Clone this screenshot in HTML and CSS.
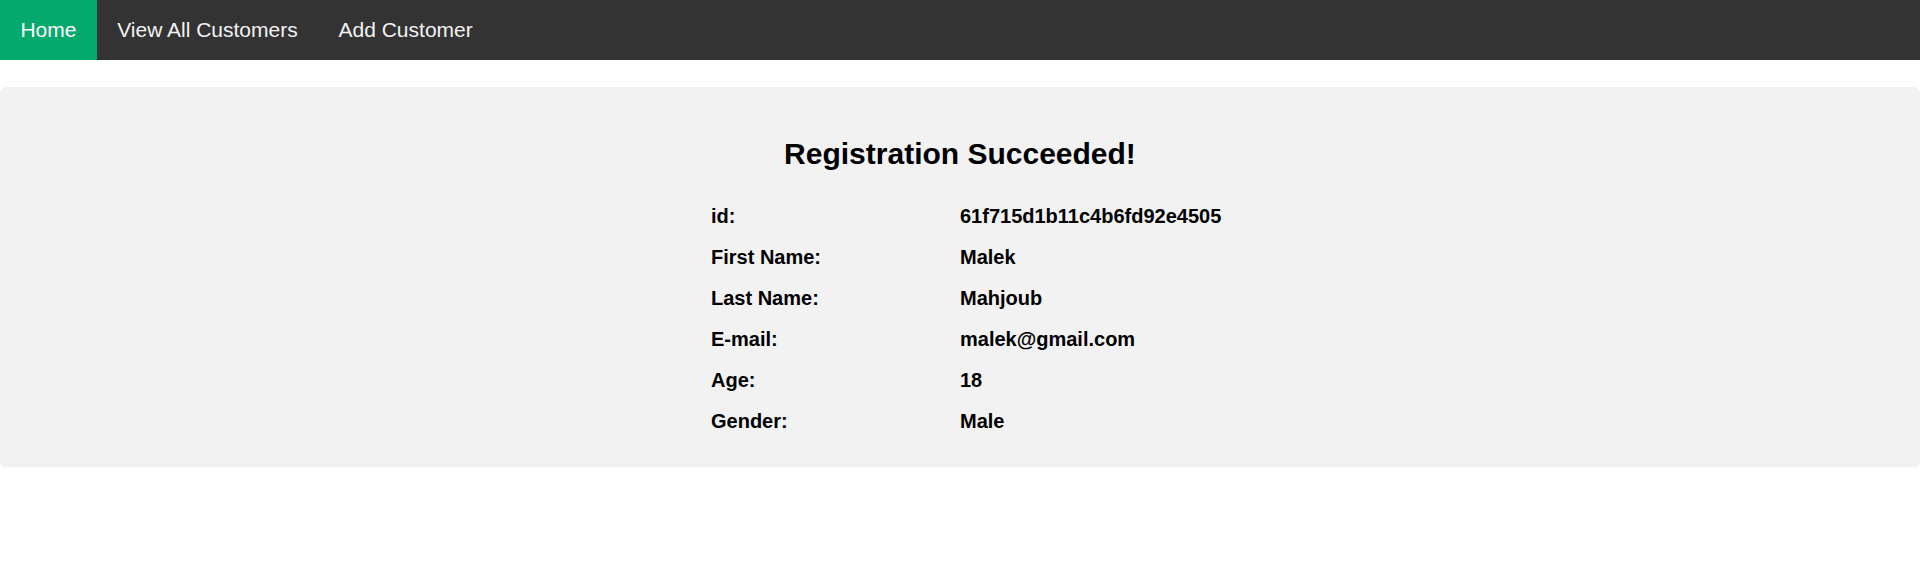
FILE: index.html
```html
<!DOCTYPE html>
<html lang="en">
<head>
<meta charset="utf-8">
<title>Registration Succeeded</title>
<link rel="stylesheet" href="styles.css">
</head>
<body>
<nav class="topnav">
  <a class="nav-link active" href="#">Home</a>
  <a class="nav-link" href="#">View All Customers</a>
  <a class="nav-link" href="#">Add Customer</a>
</nav>
<main class="card">
  <h2 class="title">Registration Succeeded!</h2>
  <div class="details">
    <div class="cell">id:</div><div class="cell">61f715d1b11c4b6fd92e4505</div>
    <div class="cell">First Name:</div><div class="cell">Malek</div>
    <div class="cell">Last Name:</div><div class="cell">Mahjoub</div>
    <div class="cell">E-mail:</div><div class="cell">malek@gmail.com</div>
    <div class="cell">Age:</div><div class="cell">18</div>
    <div class="cell">Gender:</div><div class="cell">Male</div>
  </div>
</main>
</body>
</html>
```

FILE: styles.css
```css
html, body {
  margin: 0;
  padding: 0;
  background: #ffffff;
  font-family: "Liberation Sans", Arial, sans-serif;
  color: #000000;
}

.topnav {
  display: flex;
  height: 60px;
  background: #333333;
}

.nav-link {
  display: block;
  padding: 0 20.4px;
  line-height: 59px;
  font-size: 21px;
  color: #f2f2f2;
  text-decoration: none;
}

.nav-link.active {
  background: #04aa6d;
  color: #ffffff;
}

.card {
  display: block;
  margin-top: 27px;
  padding: 25px 0 25px;
  background: #f2f2f2;
  border-radius: 6px;
}

.title {
  margin: 25px 0 24px;
  font-size: 30px;
  line-height: 34.5px;
  font-weight: bold;
  text-align: center;
}

.details {
  display: grid;
  grid-template-columns: 249px 249px;
  grid-auto-rows: 41px;
  width: 498px;
  margin: 0 auto;
  font-size: 20px;
  font-weight: bold;
}

.cell {
  padding: 9px 0;
  line-height: 23px;
  white-space: nowrap;
}
```
